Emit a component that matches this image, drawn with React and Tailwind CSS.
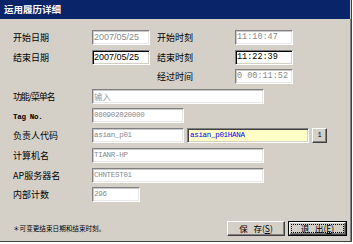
import React from "react";

const cjk = { fontFamily: '"Noto Sans CJK SC", "Liberation Sans", sans-serif' };
const mono = { fontFamily: '"Liberation Mono", "DejaVu Sans Mono", monospace' };
const sans = { fontFamily: '"Liberation Sans", Arial, sans-serif' };

const sunkenRO =
  "border border-t-[#808080] border-l-[#808080] border-r-white border-b-white shadow-[inset_1px_1px_0_#c8c8c8,inset_-1px_-1px_0_#e8e8e8] bg-white";
const sunkenRW =
  "border border-t-[#808080] border-l-[#808080] border-r-white border-b-white shadow-[inset_1px_1px_0_#000000,inset_-1px_-1px_0_#d4d0c8] bg-white";

function Label({ w, children, className = "" }) {
  return (
    <div
      className={`shrink-0 text-[9px] leading-[15px] text-black whitespace-nowrap ${w} ${className}`}
      style={cjk}
    >
      {children}
    </div>
  );
}

function Box({ w, rw, children, textClass, font }) {
  return (
    <div
      className={`shrink-0 h-[15px] flex items-center pl-[1px] overflow-hidden whitespace-nowrap ${w} ${rw ? sunkenRW : sunkenRO} ${textClass}`}
      style={font}
    >
      {children}
    </div>
  );
}

const roMono = "text-[7.5px] tracking-[-0.3px] text-[#8a8a8a]";
const timeMono = "text-[8.5px] text-[#8a8a8a]";

export default function App() {
  return (
    <div className="w-[353px] h-[244px] bg-white">
      <div className="w-[352px] h-[242px] border-r border-b border-[#404040] bg-[#d4d0c8] flex flex-col">
        <div className="h-[19px] bg-[#0a246a] mr-[1px] flex items-center pl-[4px]">
          <span className="text-white font-bold text-[9.5px]" style={cjk}>
            运用履历详细
          </span>
        </div>
        <div className="flex flex-col pl-[13px] pt-[11px] border-r border-[#808080] flex-1">
          {/* row 1 */}
          <div className="flex h-[15px]">
            <Label w="w-[79px]">开始日期</Label>
            <Box w="w-[58px]" textClass="text-[9px] text-[#8a8a8a]" font={sans}>
              2007/05/25
            </Box>
            <Label w="w-[85px]" className="pl-[7px]">开始时刻</Label>
            <Box w="w-[58px]" textClass={timeMono} font={mono}>
              11:10:47
            </Box>
          </div>
          {/* row 2 */}
          <div className="flex h-[15px] mt-[5px]">
            <Label w="w-[79px]">结束日期</Label>
            <Box w="w-[58px]" rw textClass="text-[9px] text-black" font={sans}>
              2007/05/25
            </Box>
            <Label w="w-[85px]" className="pl-[7px]">结束时刻</Label>
            <Box w="w-[58px]" rw textClass="text-[8.5px] text-black" font={mono}>
              11:22:39
            </Box>
          </div>
          {/* row 3 */}
          <div className="flex h-[15px] mt-[4px]">
            <div className="w-[137px] shrink-0" />
            <Label w="w-[85px]" className="pl-[7px]">经过时间</Label>
            <Box w="w-[58px]" textClass={timeMono} font={mono}>
              0 00:11:52
            </Box>
          </div>
          {/* row 4 */}
          <div className="flex h-[15px] mt-[5px]">
            <Label w="w-[79px]" className="tracking-[-1.2px]">功能/菜单名</Label>
            <Box w="w-[172px]" textClass="text-[8.5px] text-[#9a9a9a]" font={cjk}>
              输入
            </Box>
          </div>
          {/* row 5 */}
          <div className="flex h-[15px] mt-[4px]">
            <Label w="w-[79px]">
              <span className="font-bold text-[7.5px] tracking-[-0.3px]" style={mono}>Tag No.</span>
            </Label>
            <Box w="w-[92px]" textClass={roMono} font={mono}>
              080902020000
            </Box>
          </div>
          {/* row 6 */}
          <div className="flex h-[15px] mt-[5px] items-center">
            <Label w="w-[79px]">负责人代码</Label>
            <Box w="w-[92px]" textClass={roMono} font={mono}>
              asian_p01
            </Box>
            <div
              className="ml-[3px] shrink-0 w-[122px] h-[15px] flex items-center pl-[2px] border border-t-[#808080] border-l-[#808080] border-r-white border-b-white shadow-[inset_1px_1px_0_#404040,inset_-1px_-1px_0_#d4d0c8] bg-[#ffffc8] text-[7.5px] tracking-[-0.3px] text-[#0000ff]"
              style={mono}
            >
              asian_p01HANA
            </div>
            <div
              className="ml-[3px] shrink-0 w-[15px] h-[15px] flex items-center justify-center border border-t-white border-l-white border-r-[#404040] border-b-[#404040] shadow-[inset_-1px_-1px_0_#808080] bg-[#d4d0c8] text-[7px] text-black"
              style={mono}
            >
              1
            </div>
          </div>
          {/* row 7 */}
          <div className="flex h-[15px] mt-[5px]">
            <Label w="w-[79px]">计算机名</Label>
            <Box w="w-[172px]" textClass={roMono} font={mono}>
              TIANR-HP
            </Box>
          </div>
          {/* row 8 */}
          <div className="flex h-[15px] mt-[5px]">
            <Label w="w-[79px]">AP服务器名</Label>
            <Box w="w-[172px]" textClass={roMono} font={mono}>
              CHNTEST01
            </Box>
          </div>
          {/* row 9 */}
          <div className="flex h-[15px] mt-[4px]">
            <Label w="w-[79px]">内部计数</Label>
            <Box w="w-[48px]" textClass={roMono} font={mono}>
              296
            </Box>
          </div>
          {/* bottom */}
          <div className="flex items-center mt-[19px] pr-[3px]">
            <div className="text-[6.6px] text-black whitespace-nowrap" style={cjk}>
              ＊可变更结束日期和结束时刻。
            </div>
            <div className="flex-1" />
            <div
              className="shrink-0 w-[58px] h-[15px] flex items-center justify-center border border-t-white border-l-white border-r-[#404040] border-b-[#404040] shadow-[inset_-1px_-1px_0_#808080] text-[8.5px] text-black"
              style={cjk}
            >
              保&nbsp;&nbsp;&nbsp;存(<span className="underline">S</span>)
            </div>
            <div className="ml-[3px] shrink-0 w-[59px] h-[15px] border border-black">
              <div className="w-full h-full border border-t-white border-l-white border-r-[#404040] border-b-[#404040] shadow-[inset_-1px_-1px_0_#808080] p-[1px]">
                <div
                  className="w-full h-full border border-dotted border-black flex items-center justify-center text-[8.5px] text-black"
                  style={cjk}
                >
                  退&nbsp;&nbsp;&nbsp;出(<span className="underline">E</span>)
                </div>
              </div>
            </div>
          </div>
        </div>
      </div>
    </div>
  );
}
